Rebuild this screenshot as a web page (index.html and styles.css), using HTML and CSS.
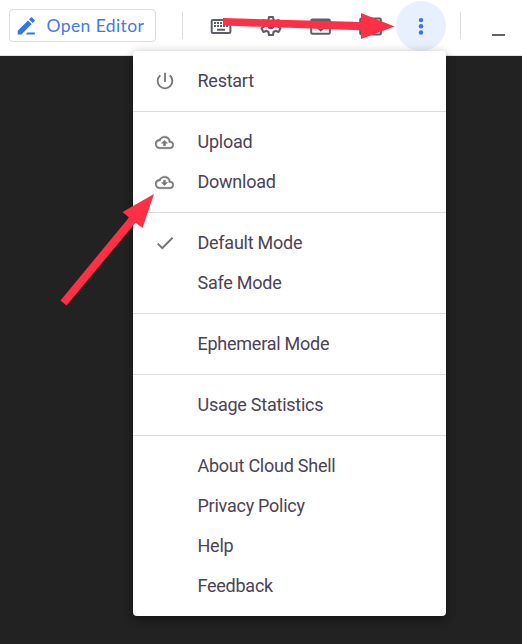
FILE: index.html
```html
<!DOCTYPE html>
<html lang="en">
<head>
<meta charset="utf-8">
<title>Cloud Shell</title>
<link rel="stylesheet" href="styles.css">
</head>
<body>
<header class="toolbar">
  <button class="editor-btn">
    <svg width="20" height="20" viewBox="0 0 20 20" fill="#3574ea"><path d="M.7 14.700 11 4.400l3.700 3.700L4.400 18.400H.7zM12 3.400l1.800-1.800q.7-.6 1.300 0l2.400 2.400q.6.600 0 1.300l-1.800 1.800zM10.500 16.600h7.300v1.800H8.700z"/></svg>
    <span>Open Editor</span>
  </button>
  <span class="rule rule-left"></span>
  <nav class="tools">
    <button class="tool" aria-label="Keyboard">
      <svg width="24" height="24" viewBox="0 0 24 24"><rect x="2.700" y="6" width="18.700" height="13" rx="1.300" fill="none" stroke="#5b6068" stroke-width="2"/><path fill="#5b6068" d="M5 8h2v2H5zM8 8h2v2H8zM11 8h2v2h-2zM14 8h2v2h-2zM17 8h2v2h-2zM5 11h2v2H5zM8 11h2v2H8zM11 11h2v2h-2zM14 11h2v2h-2zM17 11h2v2h-2zM8 14.700h8v2H8z"/></svg>
    </button>
    <button class="tool" aria-label="Settings">
      <svg width="24" height="24" viewBox="0 0 24 24"><path fill="none" stroke="#5b6068" stroke-width="2.100" stroke-linejoin="round" d="m10 3-.5 3-2.100 1.200-2.900-1.100-2 3.500L5 11.500v1l-2.500 1.900 2 3.500 2.900-1.100L9.500 18l.5 3h4l.5-3 2.100-1.200 2.900 1.100 2-3.500L19 12.500v-1l2.500-1.900-2-3.500-2.900 1.100L14.500 6 14 3z"/><circle cx="12" cy="12" r="3.300" fill="#5b6068"/></svg>
    </button>
    <button class="tool" aria-label="Web preview">
      <svg width="24" height="24" viewBox="0 0 24 24"><rect x="2.200" y="5.500" width="18.700" height="14.200" rx="1.200" fill="none" stroke="#5b6068" stroke-width="2"/><path fill="#5b6068" d="M3 5h17v3.500H3z"/><path d="m7.500 12.500 4.300 4 4.300-4" fill="none" stroke="#5b6068" stroke-width="1.800"/></svg>
    </button>
    <button class="tool" aria-label="Session">
      <svg width="24" height="24" viewBox="0 0 24 24"><rect x="1.300" y="4.500" width="20.500" height="16" rx="1.200" fill="none" stroke="#5b6068" stroke-width="2.200"/><path fill="none" stroke="#5b6068" stroke-width="1.600" d="M5 8h13.500v9H5z"/></svg>
    </button>
    <button class="tool more" aria-label="More">
      <svg width="24" height="24" viewBox="0 0 24 24" fill="#3574ea"><circle cx="12" cy="6.100" r="2.200"/><circle cx="12" cy="12.300" r="2.200"/><circle cx="12" cy="18.500" r="2.200"/></svg>
    </button>
  </nav>
  <span class="rule rule-right"></span>
  <span class="minimize"></span>
</header>

<main class="terminal">
  <div class="menu">
    <div class="group">
      <div class="item"><svg class="icon" viewBox="0 0 24 24"><path d="M13 3h-2v10h2zM17.830 5.170l-1.420 1.420A6.920 6.920 0 0 1 19 12a7 7 0 1 1-11.420-5.420L6.170 5.170A8.930 8.930 0 0 0 3 12a9 9 0 1 0 18 0c0-2.740-1.230-5.180-3.170-6.830z"/></svg><span>Restart</span></div>
    </div>
    <div class="group">
      <div class="item"><svg class="icon cloud" viewBox="0 0 24 24"><path d="M19.350 10.040A7.490 7.490 0 0 0 12 4C9.110 4 6.600 5.640 5.350 8.040A5.994 5.994 0 0 0 0 14a6 6 0 0 0 6 6h13a5 5 0 0 0 .350-9.960zM19 18H6a4 4 0 0 1 0-8h.710a5.500 5.500 0 0 1 10.790 1.500v.500H19a3 3 0 0 1 0 6zM8 13h2.550v3h2.900v-3H16l-4-4z"/></svg><span>Upload</span></div>
      <div class="item"><svg class="icon cloud" viewBox="0 0 24 24"><path d="M19.350 10.040A7.490 7.490 0 0 0 12 4C9.110 4 6.600 5.640 5.350 8.040A5.994 5.994 0 0 0 0 14a6 6 0 0 0 6 6h13a5 5 0 0 0 .350-9.960zM19 18H6a4 4 0 0 1 0-8h.710a5.500 5.500 0 0 1 10.790 1.500v.500H19a3 3 0 0 1 0 6zM8 12h2.550V9h2.900v3H16l-4 4z"/></svg><span>Download</span></div>
    </div>
    <div class="group">
      <div class="item"><svg class="icon" viewBox="0 0 24 24"><path d="M9 16.170 4.830 12l-1.420 1.410L9 19 21 7l-1.410-1.410z"/></svg><span>Default Mode</span></div>
      <div class="item"><span>Safe Mode</span></div>
    </div>
    <div class="group">
      <div class="item"><span>Ephemeral Mode</span></div>
    </div>
    <div class="group">
      <div class="item"><span>Usage Statistics</span></div>
    </div>
    <div class="group">
      <div class="item"><span>About Cloud Shell</span></div>
      <div class="item"><span>Privacy Policy</span></div>
      <div class="item"><span>Help</span></div>
      <div class="item"><span>Feedback</span></div>
    </div>
  </div>
</main>

<svg class="arrows" width="522" height="644" viewBox="0 0 522 644" fill="#ff3045">
  <path d="M223 18 361 22V13l33.500 13.500L361 39v-8.700L223 25.500z"/>
  <path d="m60.500 300.500 68.500-83-6.500-5.500 31.500-18-11.500 34-7-5.300L66.500 305.500z"/>
</svg>
</body>
</html>
```

FILE: styles.css
```css
* {
  box-sizing: border-box;
}

body {
  margin: 0;
  width: 522px;
  height: 644px;
  overflow: hidden;
  display: flex;
  flex-direction: column;
  background: #222;
  font-family: Roboto, "Liberation Sans", sans-serif;
}

button {
  margin: 0;
  padding: 0;
  border: 0;
  background: none;
}

.toolbar {
  flex: none;
  height: 56px;
  display: flex;
  align-items: flex-start;
  background: #fff;
  border-bottom: 1px solid #e3e3e3;
}

.editor-btn {
  width: 147px;
  height: 33px;
  margin: 9px 0 0 9px;
  padding-left: 7px;
  display: flex;
  align-items: center;
  gap: 9.5px;
  border: 1px solid #dadce0;
  border-radius: 4px;
  color: #4379ec;
  font: 400 17.5px/31px Lato, sans-serif;
  letter-spacing: 0.4px;
  white-space: nowrap;
}

.rule {
  width: 1px;
  height: 27px;
  margin-top: 12px;
  background: #dadce0;
}

.rule-left {
  margin-left: 26px;
}

.tools {
  display: flex;
  margin-top: 1px;
  margin-left: 13px;
}

.tool {
  width: 50px;
  height: 50px;
  display: flex;
  align-items: center;
  justify-content: center;
}

.more {
  border-radius: 50%;
  background: #e8effd;
}

.rule-right {
  margin-left: 14px;
}

.minimize {
  width: 13px;
  height: 2px;
  margin: 34px 0 0 31px;
  background: #5f6368;
}

.terminal {
  flex: 1;
}

.menu {
  position: relative;
  width: 313px;
  margin: -5px 0 0 133px;
  background: #fff;
  border-radius: 4px;
  box-shadow: 0 4px 9px rgba(0, 0, 0, 0.3), 0 1px 12px rgba(0, 0, 0, 0.14);
}

.group {
  padding: 10px 0;
}

.group + .group {
  border-top: 1px solid #dadce0;
}

.item {
  height: 40px;
  display: grid;
  grid-template-columns: 20px 1fr;
  column-gap: 22.5px;
  align-items: center;
  padding-left: 22px;
  color: #4b4354;
  font-size: 18px;
  letter-spacing: -0.25px;
  line-height: 40px;
}

.item span {
  grid-column: 2;
}

.icon {
  width: 22px;
  height: 22px;
  margin-left: -1px;
  fill: #757575;
}

.cloud {
  width: 19px;
  height: 19px;
  stroke: #757575;
  stroke-width: 0.5px;
}

.icon.cloud {
  margin-left: 0.2px;
}

.arrows {
  position: absolute;
  top: 0;
  left: 0;
  pointer-events: none;
}
```
